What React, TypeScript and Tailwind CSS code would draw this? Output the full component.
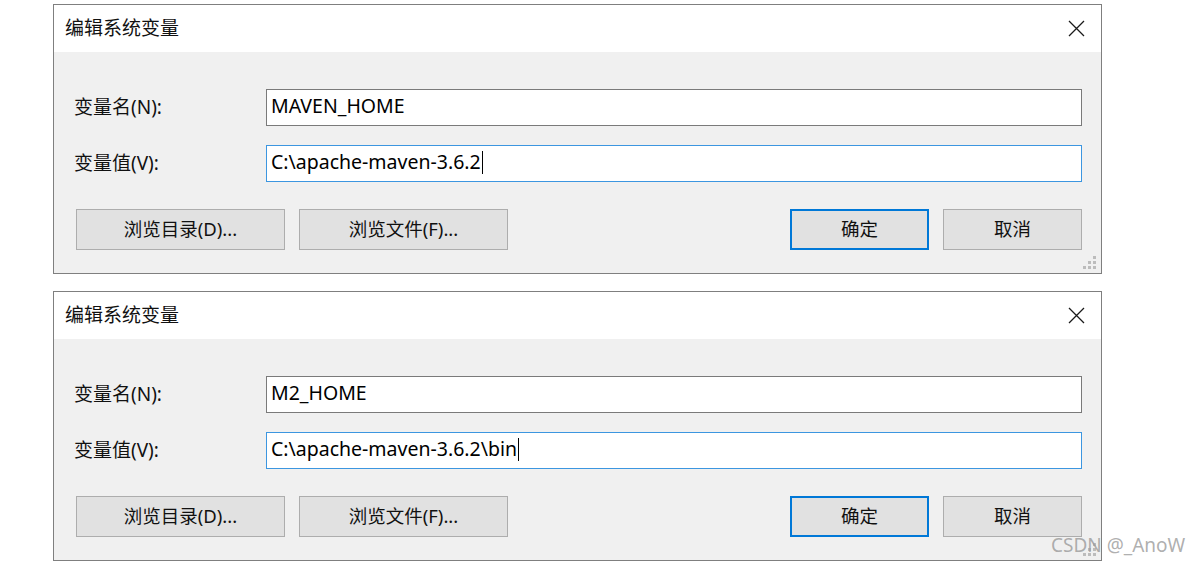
import React from "react";

const latin = "font-['Segoe_UI','Noto_Sans','Noto_Sans_CJK_SC',sans-serif]";

type DialogProps = {
  name: string;
  value: string;
};

function CloseIcon() {
  return (
    <svg width="17" height="17" viewBox="0 0 17 17" className="text-[#1a1a1a]">
      <path d="M1 1 L16 16 M16 1 L1 16" stroke="currentColor" strokeWidth="1.3" fill="none" />
    </svg>
  );
}

function ResizeGrip() {
  // small dotted triangle in the bottom-right corner
  const dots = [
    [10, 0],
    [5, 5],
    [10, 5],
    [0, 10],
    [5, 10],
    [10, 10],
  ];
  return (
    <svg width="14" height="14" viewBox="0 0 14 14" className="absolute right-[4px] bottom-[3px]">
      {dots.map(([x, y], i) => (
        <rect key={i} x={x} y={y} width="3" height="3" fill="#bcbcbc" />
      ))}
    </svg>
  );
}

function Button({ label, primary, wide }: { label: string; primary?: boolean; wide?: boolean }) {
  return (
    <div
      className={`flex h-[41px] items-center justify-center bg-[#e1e1e1] pb-[1px] text-[18.5px] text-[#111] ${
        wide ? "w-[209px]" : "w-[139px]"
      } ${primary ? "border-2 border-[#0078d7]" : "border border-[#adadad]"}`}
    >
      {label}
    </div>
  );
}

function EnvDialog({ name, value }: DialogProps) {
  return (
    <div className={`relative w-[1049px] h-[270px] border border-[#7f7f7f] bg-[#f0f0f0] ${latin}`}>
      {/* title bar */}
      <div className="flex h-[47px] items-center justify-between bg-white pl-[11px] pr-[16px]">
        <span className="text-[19px] text-[#111]">编辑系统变量</span>
        <CloseIcon />
      </div>

      <div className="flex flex-col pl-[20px] pr-[19px] pt-[37px]">
        <div className="flex items-center">
          <span className="w-[192px] text-[19px] text-[#111]">变量名(N):</span>
          <div className="flex h-[37px] flex-1 items-center border border-[#7a7a7a] bg-white pb-[3px] pl-[4px] text-[19.5px] text-[#000]">
            {name}
          </div>
        </div>
        <div className="mt-[19px] flex items-center">
          <span className="w-[192px] text-[19px] text-[#111]">变量值(V):</span>
          <div className="flex h-[37px] flex-1 items-center border border-[#3c96e0] bg-white pb-[3px] pl-[4px] text-[19.5px] text-[#000]">
            {value}
            <span className="ml-[1px] inline-block h-[23px] w-px bg-black" />
          </div>
        </div>

        <div className="mt-[27px] flex items-center pl-[2px]">
          <Button label="浏览目录(D)..." wide />
          <div className="ml-[14px]">
            <Button label="浏览文件(F)..." wide />
          </div>
          <div className="flex-1" />
          <Button label="确定" primary />
          <div className="ml-[14px]">
            <Button label="取消" />
          </div>
        </div>
      </div>
      <ResizeGrip />
    </div>
  );
}

export default function App() {
  return (
    <div className="relative h-[565px] w-[1200px] overflow-hidden bg-white">
      <div className="flex flex-col gap-[17px] pl-[53px] pt-[4px]">
        <EnvDialog name="MAVEN_HOME" value="C:\apache-maven-3.6.2" />
        <EnvDialog name="M2_HOME" value="C:\apache-maven-3.6.2\bin" />
      </div>
      <span className={`absolute left-[1051px] top-[531px] text-[19px] text-[#9a9a9a]/80 ${latin}`}>
        CSDN @_AnoW
      </span>
    </div>
  );
}
